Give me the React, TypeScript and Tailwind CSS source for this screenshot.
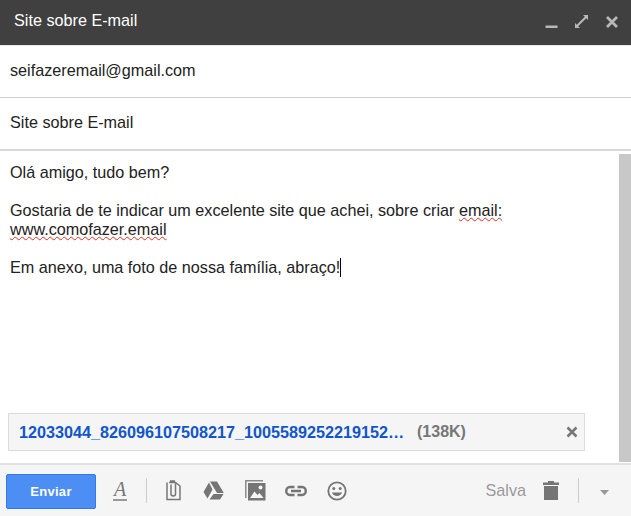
const fontStack = "font-['Liberation_Sans',Arial,sans-serif]";

function HeaderIcons() {
  return (
    <div className="flex items-center gap-[16px] pb-[2px]">
      <svg width="14" height="15" viewBox="0 0 14 15" aria-hidden="true">
        <rect x="1.500" y="11.500" width="12" height="2.500" fill="#b8b8b8" />
      </svg>
      <svg width="15" height="15" viewBox="0 0 15 15" aria-hidden="true">
        <path d="M9 1H14V6L12.200 4.200 4.200 12.200 6 14H1V9L2.800 10.800 10.800 2.800Z" fill="#b8b8b8" />
      </svg>
      <svg width="14" height="14" viewBox="0 0 14 14" aria-hidden="true">
        <path d="M2 2L12 12M12 2L2 12" stroke="#b8b8b8" strokeWidth="2.800" />
      </svg>
    </div>
  );
}

function ToolbarIcons() {
  return (
    <div className="flex items-center">
      <span className="ml-[17px] flex h-[21px] w-[14px] flex-col items-center border-b-[2px] border-[#999] font-['Liberation_Serif',serif] text-[20px] italic leading-[19px] text-[#777]">
        A
      </span>
      <div className="ml-[19px] h-[25px] w-px bg-[#ccc]" />
      <svg className="ml-[19px]" width="15" height="21" viewBox="0 0 15 21" aria-hidden="true">
        <path
          d="M3 2.500H9.500L14 6V19.500H1V2.500M4 1H9M5 4.500V14C5 16.500 9.500 16.500 9.500 14V3.500"
          fill="none"
          stroke="#777"
          strokeWidth="1.500"
        />
      </svg>
      <svg className="ml-[22px]" width="21" height="19" viewBox="0 0 21 19" aria-hidden="true">
        <path d="M7 0.500H14L20.800 12H14ZM6 1.500 9.500 8.500 4.500 17.500 0.500 11ZM10.500 13H20.500L17 18.500H6.500Z" fill="#757575" />
      </svg>
      <svg className="ml-[21px]" width="21" height="21" viewBox="0 0 21 21" aria-hidden="true">
        <path d="M0.800 18V0.800H18" fill="none" stroke="#8a8a8a" strokeWidth="1.500" />
        <path d="M3 3H20.500V20.500H3Z" fill="#757575" />
        <path d="M5 18L9.500 11.500 12.500 15 14.500 13 18.500 18Z" fill="#f5f5f5" />
        <circle cx="15.500" cy="7.500" r="2" fill="#f5f5f5" />
      </svg>
      <svg className="ml-[18px]" width="24" height="12" viewBox="0 0 24 12" aria-hidden="true">
        <path
          d="M10.500 2H6C1 2 1 10 6 10H10.500M13.500 2H18C23 2 23 10 18 10H13.500M7 6H17"
          fill="none"
          stroke="#757575"
          strokeWidth="2.400"
        />
      </svg>
      <svg className="ml-[19px]" width="20" height="20" viewBox="0 0 20 20" aria-hidden="true">
        <circle cx="10" cy="10" r="8.700" fill="none" stroke="#757575" strokeWidth="1.800" />
        <circle cx="6.800" cy="7.500" r="1.500" fill="#757575" />
        <circle cx="13.200" cy="7.500" r="1.500" fill="#757575" />
        <path d="M5 11.500H15C14 16 6 16 5 11.500Z" fill="#757575" />
      </svg>
    </div>
  );
}

export default function App() {
  return (
    <div className={`flex h-[516px] w-[631px] flex-col overflow-hidden bg-white text-[16.200px] text-[#222] ${fontStack}`}>
      <div className="flex h-[45px] shrink-0 items-center justify-between bg-[#404040] pl-[14px] pr-[12px]">
        <span className="mb-[4px] text-white">Site sobre E-mail</span>
        <HeaderIcons />
      </div>

      <div className="flex h-[53px] shrink-0 items-center border-y border-y-[#cfcfcf] border-t-[#e8e8e8] pb-[2px] pl-[10px]">
        seifazeremail@gmail.com
      </div>
      <div className="flex h-[53px] shrink-0 items-center border-b-2 border-[#d8d8d8] pb-[3px] pl-[10px]">
        Site sobre E-mail
      </div>

      <div className="flex min-h-0 flex-1">
        <div className="flex min-w-0 flex-1 flex-col justify-between pb-[12px] pl-[8px] pr-[34px] pt-[12px]">
          <div className="pl-[2px] leading-[19px] text-[#222]">
            <p>Olá amigo, tudo bem?</p>
            <p className="mt-[19px]">
              Gostaria de te indicar um excelente site que achei, sobre criar{" "}
              <span className="underline decoration-[#d93025] decoration-wavy decoration-1 underline-offset-[1px]">email:</span>
            </p>
            <p>
              <span className="underline decoration-[#d93025] decoration-wavy decoration-1 underline-offset-[1px]">www.comofazer.email</span>
            </p>
            <p className="mt-[19px] flex items-center">
              Em anexo, uma foto de nossa família, abraço!
              <span className="h-[19px] w-px bg-black" />
            </p>
          </div>

          <div className="flex h-[38px] items-center border border-[#dcdcdc] bg-[#f5f5f5] pl-[10px] pr-[6px] text-[16px] font-bold">
            <span className="w-[387px] whitespace-nowrap text-[16.200px] text-[#15c]">12033044_826096107508217_1005589252219152…</span>
            <span className="ml-[11px] text-[#777]">(138K)</span>
            <svg className="ml-auto" width="12" height="12" viewBox="0 0 12 12" aria-hidden="true">
              <path d="M1.500 1.500L10.500 10.500M10.500 1.500L1.500 10.500" stroke="#777" strokeWidth="2.600" />
            </svg>
          </div>
        </div>
        <div className="mb-[1px] mt-[3px] w-[12px] shrink-0 bg-[#c8c8c8]" />
      </div>

      <div className="flex h-[53px] shrink-0 items-center border-t-2 border-[#e2e2e2] bg-[#f5f5f5] pl-[6px] pr-[22px]">
        <button className="mt-[2px] h-[35px] w-[90px] rounded-[2px] border border-[#3079ed] bg-[#4d8ef4] text-[13px] font-bold tracking-[0.3px] text-white">
          Enviar
        </button>
        <ToolbarIcons />
        <span className="ml-auto text-[#9a9a9a]">Salva</span>
        <svg className="ml-[17px]" width="16" height="19" viewBox="0 0 16 19" aria-hidden="true">
          <path d="M5 0H11V1.500H16V4H0V1.500H5ZM1 5H15V19H1Z" fill="#757575" />
        </svg>
        <div className="ml-[19px] h-[25px] w-px bg-[#ccc]" />
        <svg className="ml-[21px] mt-[3px]" width="9" height="5" viewBox="0 0 9 5" aria-hidden="true">
          <path d="M0 0H9L4.500 5Z" fill="#999" />
        </svg>
      </div>
    </div>
  );
}
